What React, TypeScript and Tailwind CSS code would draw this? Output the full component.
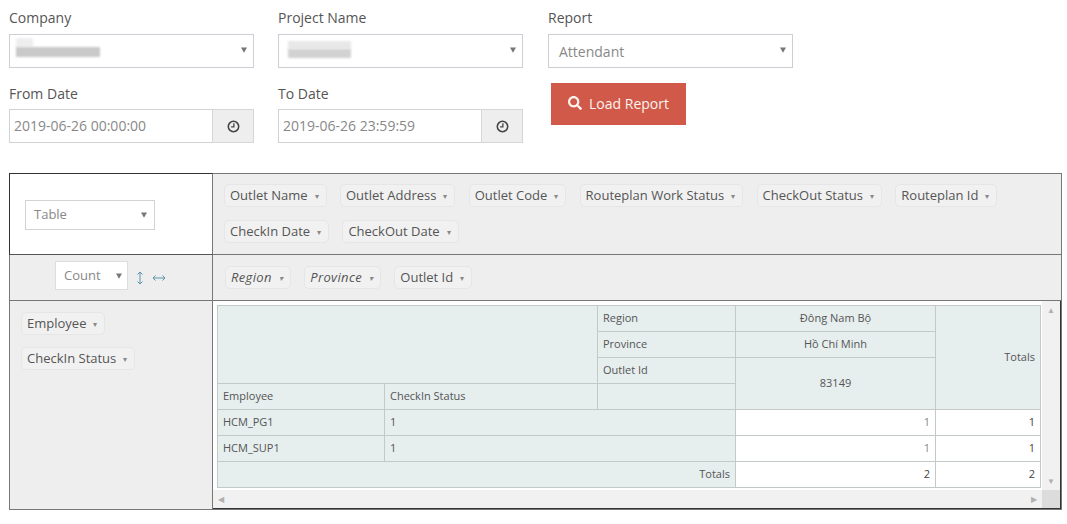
import { FaSearch } from "react-icons/fa";

const colPills = ["Outlet Name", "Outlet Address", "Outlet Code", "Routeplan Work Status", "CheckOut Status", "Routeplan Id", "CheckIn Date", "CheckOut Date"];

const Arrow = ({ className = "" }: { className?: string }) => (
  <svg viewBox="0 0 8 7" className={`w-[6px] h-[6px] fill-[#777] ${className}`}>
    <polygon points="0,0 8,0 4,7" />
  </svg>
);

const ClockIcon = () => (
  <svg viewBox="0 0 14 14" className="w-[13px] h-[13px] fill-none stroke-[#444]">
    <circle cx="7" cy="7" r="5.6" strokeWidth="1.7" />
    <path d="M7.4 3.6V7.5H4.4" strokeWidth="1.4" />
  </svg>
);

const Pill = ({ label, italic }: { label: string; italic?: boolean }) => (
  <div className={`flex items-center h-[23px] pl-[5px] pr-[7px] pt-[1px] rounded-[5px] border border-[#e6e6e6] bg-[#f1f1f1] text-[13px] text-[#555] whitespace-nowrap ${italic ? "italic tracking-[0.35px]" : ""}`}>
    {label}
    <span className="ml-[7px] text-[8px] text-[#888]">▾</span>
  </div>
);

const Field = ({ label, low, children }: { label: string; low?: boolean; children: React.ReactNode }) => (
  <div className={`w-[245px] h-[75px] ${low ? "pt-[9px]" : "pt-[8px]"}`}>
    <div className={`h-[20px] leading-[20px] text-[14px] text-[#555] ${low ? "mb-[5px]" : "mb-[6px]"}`}>{label}</div>
    {children}
  </div>
);

const SelectBox = ({ children }: { children: React.ReactNode }) => (
  <div className="flex items-center justify-between h-[34px] pl-[10px] pr-[6px] border border-[#ccd0d4] bg-white text-[14px] text-[#888]">
    {children}
    <Arrow className="-mt-[2px]" />
  </div>
);

const DateBox = ({ value }: { value: string }) => (
  <div className="flex h-[34px] border border-[#d0d3d6] text-[14px] text-[#888]">
    <div className="flex-1 flex items-center pl-[4px] pb-[2px] bg-white">{value}</div>
    <div className="flex items-center justify-center w-[42px] -mt-px -mb-px border border-[#d6d6d6] -mr-px bg-[#eeeeee]">
      <ClockIcon />
    </div>
  </div>
);

const cell = "border border-[#c3c9c9] px-[5px] font-normal align-middle";
const th = `${cell} bg-[#e6eeee] text-left`;
const thC = `${cell} bg-[#e6eeee] text-center`;
const thR = `${cell} bg-[#e6eeee] text-right`;
const td = `${cell} bg-white text-right text-[#444]`;
const tdLight = `${cell} bg-white text-right text-[#888]`;

const PivotTable = () => (
  <table className="table-fixed border-collapse w-[823px] text-[11px] text-[#555] [&_tr]:h-[26px]">
    <colgroup>
      <col className="w-[167px]" />
      <col className="w-[213px]" />
      <col className="w-[138px]" />
      <col className="w-[200px]" />
      <col className="w-[105px]" />
    </colgroup>
    <tbody>
      <tr>
        <th colSpan={2} rowSpan={3} className={th}></th>
        <th className={th}>Region</th>
        <th className={thC}>Đông Nam Bộ</th>
        <th rowSpan={4} className={thR}>Totals</th>
      </tr>
      <tr>
        <th className={th}>Province</th>
        <th className={thC}>Hồ Chí Minh</th>
      </tr>
      <tr>
        <th className={th}>Outlet Id</th>
        <th rowSpan={2} className={thC}>83149</th>
      </tr>
      <tr>
        <th className={th}>Employee</th>
        <th className={th}>CheckIn Status</th>
        <th className={th}></th>
      </tr>
      <tr>
        <th className={th}>HCM_PG1</th>
        <th colSpan={2} className={th}>1</th>
        <td className={tdLight}>1</td>
        <td className={td}>1</td>
      </tr>
      <tr>
        <th className={th}>HCM_SUP1</th>
        <th colSpan={2} className={th}>1</th>
        <td className={tdLight}>1</td>
        <td className={td}>1</td>
      </tr>
      <tr>
        <th colSpan={3} className={thR}>Totals</th>
        <td className={td}>2</td>
        <td className={td}>2</td>
      </tr>
    </tbody>
  </table>
);

export default function App() {
  return (
    <div className="h-[524px] w-[1067px] overflow-hidden bg-white pl-[9px] font-['Open_Sans',sans-serif]">
      {/* Filter form */}
      <div className="grid grid-cols-[269px_270px_245px]">
        <Field label="Company">
          <SelectBox>
            <div className="flex flex-col items-start -ml-[4px] mb-[7px]">
              <div className="w-[17px] h-[9px] bg-[#eeeeee] blur-[1px]" />
              <div className="w-[84px] h-[10px] bg-[#c9c9c9] blur-[1px]" />
            </div>
          </SelectBox>
        </Field>
        <Field label="Project Name">
          <SelectBox>
            <div className="flex flex-col items-start -ml-[1px] mb-[3px]">
              <div className="w-[63px] h-[8px] bg-[#e8e8e8] blur-[1px]" />
              <div className="w-[63px] h-[9px] bg-[#d2d2d2] blur-[1px]" />
            </div>
          </SelectBox>
        </Field>
        <Field label="Report">
          <SelectBox>Attendant</SelectBox>
        </Field>
        <Field label="From Date" low>
          <DateBox value="2019-06-26 00:00:00" />
        </Field>
        <Field label="To Date" low>
          <DateBox value="2019-06-26 23:59:59" />
        </Field>
        <div>
          <button className="flex items-center justify-center gap-[7px] ml-[3px] mt-[8px] pb-[2px] w-[135px] h-[42px] bg-[#d0594a] text-[14px] text-[#fdf3ee]">
            <FaSearch size={14} />
            Load Report
          </button>
        </div>
      </div>

      {/* Pivot UI */}
      <div className="mt-[23px] w-[1053px] h-[337px] grid grid-cols-[203px_1fr] grid-rows-[81px_46px_1fr] border border-[#777]">
        <div className="flex items-center -mt-px -ml-px pl-[15px] pt-[2px] bg-white border-t border-l border-r border-b border-[#333] border-r-[#777] border-b-[#555]">
          <div className="flex items-center justify-between w-[130px] h-[30px] pl-[8px] pr-[7px] border border-[#d3d3d3] text-[13px] text-[#888]">
            Table
            <Arrow />
          </div>
        </div>
        <div className="flex flex-wrap content-start gap-x-[13.3px] gap-y-[13px] pl-[11px] pt-[10px] bg-[#eeeeee] border-b border-[#777]">
          {colPills.map((p) => (
            <Pill key={p} label={p} />
          ))}
        </div>

        <div className="flex items-center pl-[45px] pb-[4px] bg-[#eeeeee] border-r border-b border-[#777]">
          <div className="flex items-center justify-between w-[73px] h-[29px] pl-[8px] pr-[5px] border border-[#dddddd] bg-white text-[13px] text-[#888]">
            Count
            <Arrow />
          </div>
          <svg viewBox="0 0 8 14" className="ml-[8px] mt-[4px] w-[8px] h-[14px] fill-none stroke-[#5b93ad]">
            <path d="M4 1V13M1.500 3.500L4 1L6.500 3.500M1.500 10.500L4 13L6.500 10.500" />
          </svg>
          <svg viewBox="0 0 14 8" className="ml-[8px] mt-[4px] w-[14px] h-[8px] fill-none stroke-[#5b93ad]">
            <path d="M1 4H13M3.500 1.500L1 4L3.500 6.500M10.500 1.500L13 4L10.500 6.500" />
          </svg>
        </div>
        <div className="flex items-center gap-x-[13px] pl-[12px] bg-[#eeeeee] border-b border-[#777]">
          <Pill label="Region" italic />
          <Pill label="Province" italic />
          <Pill label="Outlet Id" />
        </div>

        <div className="flex flex-col items-start gap-[12px] pl-[11px] pt-[11px] bg-[#eeeeee] border-r border-[#777]">
          <Pill label="Employee" />
          <Pill label="CheckIn Status" />
        </div>
        <div className="grid grid-cols-[1fr_18px] grid-rows-[1fr_18px] bg-white border-b border-r border-[#333]">
          <div className="pl-[4px] pt-[4px] overflow-hidden">
            <PivotTable />
          </div>
          <div className="flex flex-col items-center justify-between py-[5px] bg-[#f1f1f1] text-[8px] leading-none text-[#b0b0b0]">
            <span>▲</span>
            <span>▼</span>
          </div>
          <div className="flex items-center justify-between px-[5px] bg-[#f1f1f1] text-[8px] leading-none text-[#b0b0b0]">
            <span>◀</span>
            <span>▶</span>
          </div>
          <div className="bg-[#dcdcdc]" />
        </div>
      </div>
    </div>
  );
}
